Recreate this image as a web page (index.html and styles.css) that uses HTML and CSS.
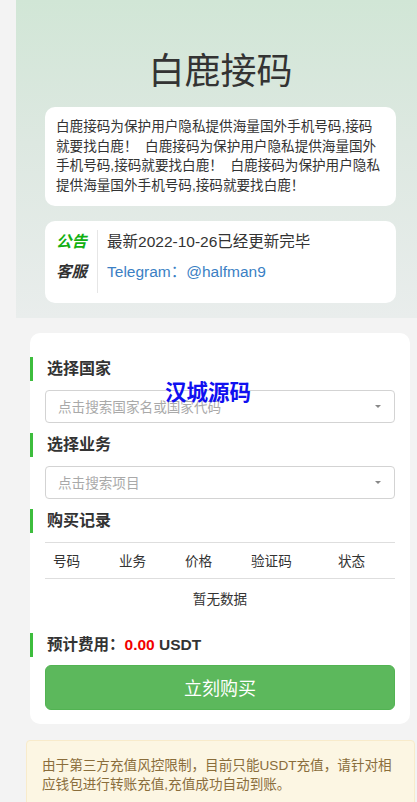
FILE: index.html
```html
<!DOCTYPE html>
<html lang="zh-CN">
<head>
<meta charset="utf-8">
<title>白鹿接码</title>
<link rel="stylesheet" href="styles.css">
</head>
<body>
<div class="header">
  <h1 class="title">白鹿接码</h1>
  <div class="card intro">白鹿接码为保护用户隐私提供海量国外手机号码,接码就要找白鹿！&nbsp; 白鹿接码为保护用户隐私提供海量国外手机号码,接码就要找白鹿！&nbsp; 白鹿接码为保护用户隐私提供海量国外手机号码,接码就要找白鹿！</div>
  <div class="card notice">
    <div class="labels">
      <div class="row lbl-green">公告</div>
      <div class="row lbl-dark">客服</div>
    </div>
    <div class="values">
      <div class="row">最新2022-10-26已经更新完毕</div>
      <div class="row link">Telegram：@halfman9</div>
    </div>
  </div>
</div>

<div class="main">
  <div class="heading">选择国家</div>
  <div class="select"><span class="ph">点击搜索国家名或国家代码</span><span class="caret"></span></div>
  <div class="heading">选择业务</div>
  <div class="select"><span class="ph">点击搜索项目</span><span class="caret"></span></div>
  <div class="heading">购买记录</div>
  <table class="records">
    <thead>
      <tr><th class="c1">号码</th><th class="c2">业务</th><th class="c3">价格</th><th class="c4">验证码</th><th class="c5">状态</th></tr>
    </thead>
    <tbody>
      <tr><td colspan="5" class="empty">暂无数据</td></tr>
    </tbody>
  </table>
  <div class="heading cost">预计费用：<span class="red">0.00</span> USDT</div>
  <button class="buy">立刻购买</button>
</div>

<div class="warn">由于第三方充值风控限制，目前只能USDT充值，请针对相应钱包进行转账充值,充值成功自动到账。</div>

<div class="watermark">汉城源码</div>
</body>
</html>
```

FILE: styles.css
```css
html, body {
  margin: 0;
  padding: 0;
}
body {
  background: #f3f3f3;
  font-family: "Liberation Sans", "Noto Sans CJK SC", sans-serif;
  color: #333;
  font-size: 13.6px;
  position: relative;
  width: 417px;
  height: 802px;
  overflow: hidden;
}
.header {
  margin-left: 16px;
  padding: 50px 21px 15px 29px;
  background: linear-gradient(180deg, #d1e6d6 0%, #dde8e1 45%, #e9edec 100%);
}
.title {
  margin: 0;
  font-size: 36px;
  line-height: 44px;
  font-weight: normal;
  text-align: center;
  color: #333;
}
.card {
  background: #fff;
  border-radius: 10px;
}
.intro {
  margin-top: 13px;
  padding: 10px 11px;
  font-size: 13.6px;
  line-height: 19.7px;
  color: #333;
}
.notice {
  margin-top: 15px;
  padding: 9px 11px 10px;
  display: flex;
  font-size: 15.5px;
}
.notice .labels {
  padding: 0 10px 9px 0;
  border-right: 1px solid #e6e6e6;
}
.notice .values {
  padding-left: 9px;
}
.notice .row {
  line-height: 24px;
  height: 24px;
  margin-bottom: 6px;
  white-space: nowrap;
}
.notice .row:last-child {
  margin-bottom: 0;
}
.lbl-green {
  color: #12b012;
  font-weight: bold;
  font-style: italic;
}
.lbl-dark {
  color: #333;
  font-weight: bold;
  font-style: italic;
}
.link {
  color: #3b7fc4;
}
.main {
  margin: 15px 7px 0 30px;
  background: #fff;
  border-radius: 10px;
  padding: 24px 15px 14px;
}
.heading {
  margin-left: -15px;
  padding-left: 14px;
  border-left: 3px solid #3dbd3d;
  height: 24px;
  line-height: 24px;
  font-size: 16px;
  font-weight: bold;
  color: #333;
  margin-top: 9px;
}
.heading:first-child {
  margin-top: 0;
}
.select {
  margin-top: 9px;
  height: 33px;
  box-sizing: border-box;
  border: 1px solid #d3d3d3;
  border-radius: 4px;
  padding: 0 12px;
  display: flex;
  align-items: center;
  justify-content: space-between;
}
.select + .heading {
  margin-top: 10px;
}
.ph {
  color: #a9a9a9;
  font-size: 13.6px;
}
.caret {
  width: 0;
  height: 0;
  border-left: 3px solid transparent;
  border-right: 3px solid transparent;
  border-top: 3px solid #888;
  margin-right: 1px;
}
.records {
  margin-top: 9px;
  width: 350px;
  border-collapse: collapse;
  table-layout: fixed;
  font-size: 13.6px;
}
.records th {
  box-sizing: border-box;
  font-weight: normal;
  text-align: left;
  padding: 0 8px;
  height: 36px;
  border-top: 1px solid #dedede;
  border-bottom: 1px solid #dedede;
  color: #333;
}
.c1, .c2, .c3 { width: 66px; }
.c4 { width: 87px; }
.c5 { width: 65px; }
.records .empty {
  text-align: center;
  height: 38px;
  padding: 0;
  color: #333;
}
.heading.cost {
  margin-top: 16px;
  font-size: 15.5px;
}
.red {
  color: #f20000;
}
.buy {
  display: block;
  margin-top: 8px;
  width: 350px;
  height: 45px;
  border: 1px solid #52b352;
  border-radius: 6px;
  background: #5cb85c;
  color: #fff;
  font-family: "Liberation Sans", "Noto Sans CJK SC", sans-serif;
  font-size: 18px;
  padding: 0;
}
.warn {
  margin: 16px 2px 0 26px;
  background: #fcf6e3;
  border: 1px solid #f8ebcb;
  border-radius: 4px;
  padding: 15px 15px 20px;
  color: #8a6d3b;
  font-size: 13.6px;
  line-height: 19px;
}
.watermark {
  position: absolute;
  left: 165px;
  top: 380px;
  font-size: 21.5px;
  line-height: 26px;
  font-weight: bold;
  color: #1010f0;
  letter-spacing: 0;
}
```
